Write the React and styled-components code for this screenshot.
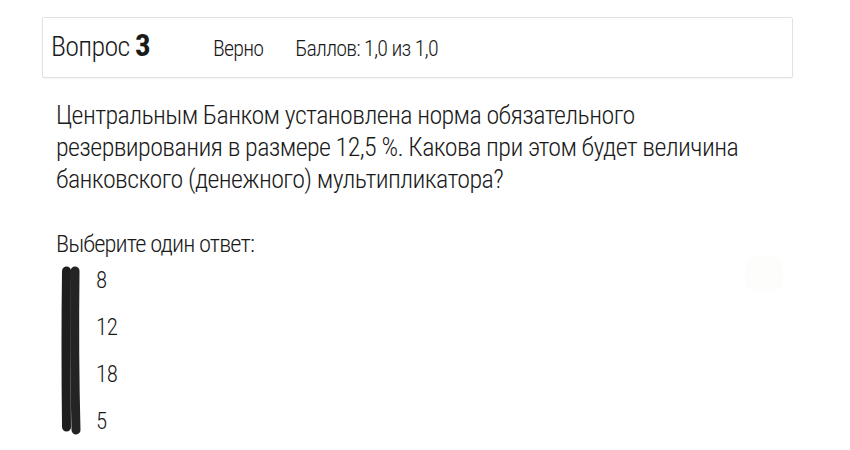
import styled, { createGlobalStyle } from "styled-components";

const GlobalStyle = createGlobalStyle`
  body {
    margin: 0;
    background: #ffffff;
    font-family: Roboto, "Noto Sans", sans-serif;
    font-weight: 300;
    font-stretch: condensed;
    color: #1a1a1a;
  }
`;

const Page = styled.div`
  width: 850px;
  height: 450px;
  padding: 17px 57px 0 42px;
  box-sizing: border-box;
  position: relative;
`;

// шапка вопроса
const Header = styled.div`
  display: flex;
  align-items: baseline;
  height: 61px;
  box-sizing: border-box;
  padding: 9px 8px 0;
  border: 1px solid #e2e2e2;
  border-radius: 2px;
  box-shadow: 0 1px 2px rgba(0, 0, 0, 0.04);
`;

const Title = styled.div`
  font-size: 28px;
  letter-spacing: -0.7px;
  width: 162px;
`;

const Number = styled.span`
  font-weight: 700;
  font-size: 31px;
  letter-spacing: 0;
`;

const Meta = styled.span`
  font-size: 22px;
  letter-spacing: -0.8px;
  margin-right: ${(p) => p.gap || 0}px;
`;

const Question = styled.p`
  margin: 21px 0 0 14px;
  font-size: 26px;
  letter-spacing: -0.6px;
  line-height: 32px;
  width: 750px;
`;

const Prompt = styled.div`
  margin: 38px 0 0 14px;
  font-size: 24.5px;
  letter-spacing: -0.9px;
  line-height: 22px;
`;

const Answers = styled.div`
  position: relative;
  display: flex;
  flex-direction: column;
  gap: 23px;
  margin: 14px 0 0 54px;
`;

const Option = styled.div`
  font-size: 23px;
  letter-spacing: -0.5px;
  line-height: 24px;
`;

// зачёркнутые радио-кнопки
const Scribble = styled.svg`
  position: absolute;
  left: -38px;
  top: -4px;
`;

const Smudge = styled.div`
  position: absolute;
  left: 745px;
  top: 257px;
  width: 38px;
  height: 34px;
  border-radius: 10px;
  background: #fdfdfc;
`;

export default function App() {
  const options = ["8", "12", "18", "5"];
  return (
    <>
      <GlobalStyle />
      <Page>
        <Header>
          <Title>
            Вопрос <Number>3</Number>
          </Title>
          <Meta gap={32}>Верно</Meta>
          <Meta>Баллов: 1,0 из 1,0</Meta>
        </Header>
        <Question>
          Центральным Банком установлена норма обязательного
          <br />
          резервирования в размере 12,5 %. Какова при этом будет величина
          <br />
          банковского (денежного) мультипликатора?
        </Question>
        <Prompt>Выберите один ответ:</Prompt>
        <Answers>
          <Scribble width="30" height="172" viewBox="0 0 30 172">
            <path
              d="M8.5 6 Q7.5 80 8.5 162"
              stroke="#1e1e1e"
              strokeWidth="9"
              strokeLinecap="round"
              fill="none"
            />
            <path
              d="M17 6 Q16 90 18 165"
              stroke="#242424"
              strokeWidth="9"
              strokeLinecap="round"
              fill="none"
            />
          </Scribble>
          {options.map((o) => (
            <Option key={o}>{o}</Option>
          ))}
        </Answers>
        <Smudge />
      </Page>
    </>
  );
}
